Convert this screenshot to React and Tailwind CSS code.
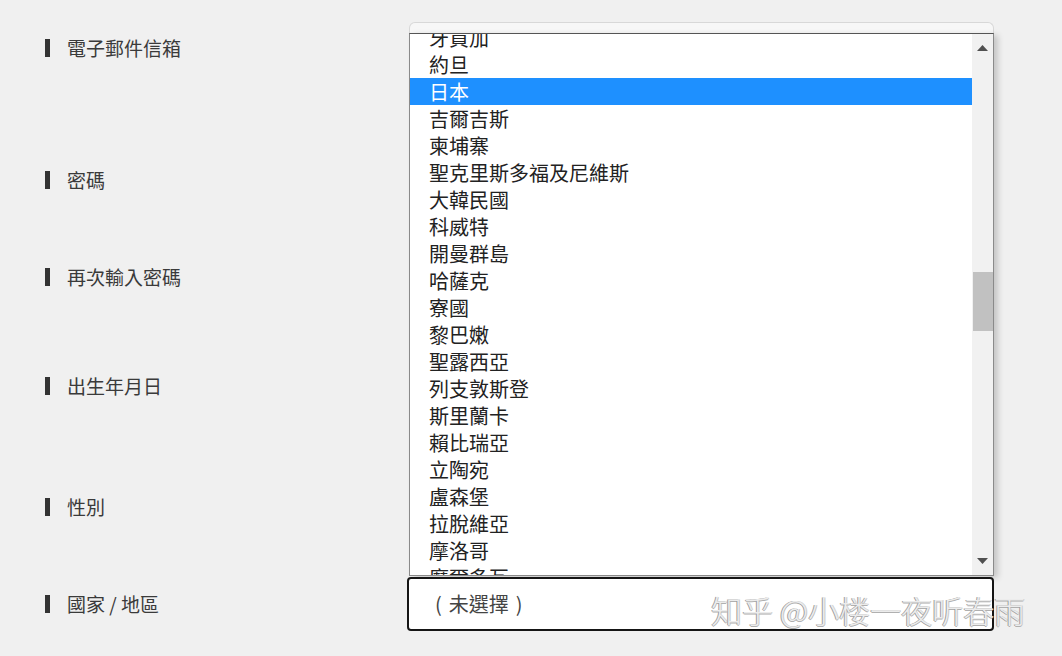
import React from 'react'

const labels = [
  { text: '電子郵件信箱', mt: 'mt-[36px]' },
  { text: '密碼', mt: 'mt-[108px]' },
  { text: '再次輸入密碼', mt: 'mt-[73px]' },
  { text: '出生年月日', mt: 'mt-[85px]' },
  { text: '性別', mt: 'mt-[97px]' },
  { text: '國家 / 地區', mt: 'mt-[73px]' },
]

const countries = [
  '牙買加', '約旦', '日本', '吉爾吉斯', '柬埔寨', '聖克里斯多福及尼維斯', '大韓民國',
  '科威特', '開曼群島', '哈薩克', '寮國', '黎巴嫩', '聖露西亞', '列支敦斯登',
  '斯里蘭卡', '賴比瑞亞', '立陶宛', '盧森堡', '拉脫維亞', '摩洛哥', '摩爾多瓦',
]

const cjk = { fontFamily: '"Noto Sans CJK TC", "Noto Sans", sans-serif' }

export default function App() {
  return (
    <div className="relative w-[1062px] h-[656px] overflow-hidden bg-[#f0f0f0] flex text-[#333]" style={cjk}>
      <div className="w-[408px] pl-[45px] flex flex-col">
        {labels.map((l) => (
          <div key={l.text} className={`${l.mt} h-[24px] flex items-center`}>
            <span className="w-[5px] h-[18px] bg-[#333]" />
            <span className="ml-[17px] text-[19px] leading-[24px] text-[#3a3a3a]">{l.text}</span>
          </div>
        ))}
      </div>

      <div className="w-[586px] pt-[22px] flex flex-col">
        <div className="ml-[1px] h-[11px] rounded-t-[6px] border border-b-0 border-[#d8d8d8] bg-[#f7f7f7]" />
        <div className="ml-[1px] h-[543px] flex bg-white border border-[#8a8a8a] border-t-[#555] shadow-[4px_2px_6px_rgba(0,0,0,0.18)]">
          <div className="flex-1 overflow-hidden">
            <div className="-mt-[10px]">
              {countries.map((c) => (
                <div
                  key={c}
                  className={`h-[27px] pl-[19px] text-[20px] leading-[27px] ${c === '日本' ? 'bg-[#1e90ff] text-white' : 'text-[#222]'}`}
                >
                  {c}
                </div>
              ))}
            </div>
          </div>
          <div className="w-[21px] bg-[#f1f1f1] flex flex-col items-center">
            <div className="h-[17px] flex items-end">
              <svg width="11" height="6" viewBox="0 0 11 6"><path d="M0 6 L5.5 0 L11 6 Z" fill="#505050" /></svg>
            </div>
            <div className="mt-[221px] w-[20px] h-[59px] bg-[#c1c1c1]" />
            <div className="flex-1" />
            <div className="h-[17px] flex items-start">
              <svg width="11" height="6" viewBox="0 0 11 6"><path d="M0 0 L11 0 L5.5 6 Z" fill="#505050" /></svg>
            </div>
          </div>
        </div>
        <div className="mt-[1px] -ml-[1px] h-[54px] rounded-[4px] border-2 border-[#151515] bg-white flex items-center pl-[26px] text-[20px] text-[#444]">
          <span>(</span>
          <span className="ml-[7px]">未選擇</span>
          <span className="ml-[7px]">)</span>
        </div>
      </div>

      <div
        className="absolute left-[711px] top-[590px] text-[31px] leading-[40px] font-light text-[#ececec] whitespace-nowrap"
        style={{ fontFamily: '"Noto Sans CJK SC", "Noto Sans", sans-serif', textShadow: '-1px 0 0 #9c9c9c, 0 1px 0 #b0b0b0, 1px 0 0 #d0d0d0' }}
      >
        知乎 @小楼一夜听春雨
      </div>
    </div>
  )
}
